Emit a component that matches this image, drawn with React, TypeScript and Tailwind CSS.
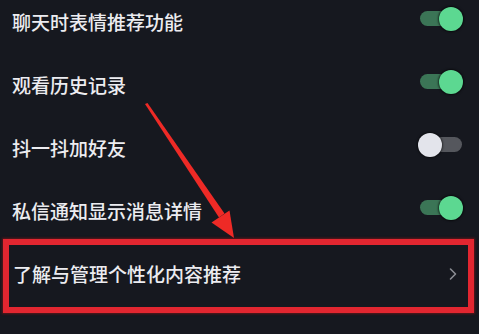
import React from "react";

function Toggle({ on }: { on: boolean }) {
  return (
    <div className="relative w-[42px] h-[15px]">
      <div className={"absolute inset-0 rounded-full " + (on ? "bg-[#3b7556]" : "bg-[#55575d]")} />
      <div
        className={
          "absolute top-1/2 -translate-y-1/2 w-[24px] h-[24px] rounded-full " +
          (on ? "right-[-1px] bg-[#5cd891] shadow-[0_0_2px_1px_rgba(0,0,0,0.6)]" : "left-[-2px] bg-[#e3e4eb] shadow-[0_0_2px_1px_rgba(0,0,0,0.5)]")
        }
      />
    </div>
  );
}

const rows: { label: string; toggle?: boolean }[] = [
  { label: "聊天时表情推荐功能", toggle: true },
  { label: "观看历史记录", toggle: true },
  { label: "抖一抖加好友", toggle: false },
  { label: "私信通知显示消息详情", toggle: true },
  { label: "了解与管理个性化内容推荐" },
];

export default function App() {
  return (
    <div
      className="relative w-[479px] h-[334px] overflow-hidden bg-[#16181f] text-[#ececf0]"
      style={{ fontFamily: '"Noto Sans CJK SC", "Noto Sans", sans-serif' }}
    >
      <div className="flex flex-col -mt-[10px]">
        {rows.map((r, i) => (
          <div key={i} className="flex items-center justify-between h-[63px] pl-[12px] pr-[17px]">
            <span className={"text-[19px] leading-none font-medium " + (i === 4 ? "pl-[1px]" : "")}>{r.label}</span>
            {r.toggle !== undefined ? (
              <div className="-mt-[6px]">
                <Toggle on={r.toggle} />
              </div>
            ) : (
              <svg width="10" height="14" viewBox="0 0 10 14" className="mr-[4px]">
                <path d="M2.5 2 L7.5 7 L2.5 12" fill="none" stroke="#8b8d93" strokeWidth="1.6" strokeLinecap="round" strokeLinejoin="round" />
              </svg>
            )}
          </div>
        ))}
      </div>
      <div className="absolute left-[3px] top-[239px] w-[471px] h-[74px] border-[6px] border-[#e22630] shadow-[0_0_2px_1px_rgba(140,20,20,0.6)]" />
      <svg className="absolute left-0 top-0" width="479" height="334" viewBox="0 0 479 334">
        <polygon points="145,104 147.5,103 224.5,213.5 219,217.5" fill="#ee2a26" />
        <polygon points="234,238 211.5,222.5 229.5,210.5" fill="#ee2a26" />
      </svg>
    </div>
  );
}
